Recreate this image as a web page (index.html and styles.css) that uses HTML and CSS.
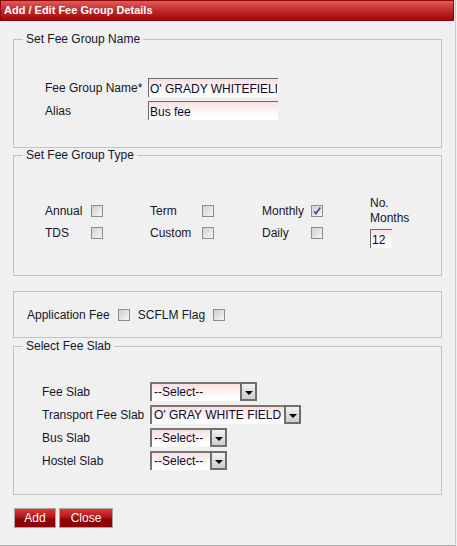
FILE: index.html
```html
<!DOCTYPE html>
<html>
<head>
<meta charset="utf-8">
<title>Add / Edit Fee Group Details</title>
<link rel="stylesheet" href="styles.css">
</head>
<body>
<div class="dialog">
  <div class="titlebar">Add / Edit Fee Group Details</div>

  <fieldset class="fs fs-name">
    <legend>Set Fee Group Name</legend>
    <div class="name-grid">
      <label>Fee Group Name*</label><input class="txt w130" value="O' GRADY WHITEFIELD">
      <label>Alias</label><input class="txt w130" value="Bus fee">
    </div>
  </fieldset>

  <fieldset class="fs fs-type">
    <legend>Set Fee Group Type</legend>
    <div class="type-grid">
      <div class="months">No.<br>Months<input class="txt w22" value="12"></div>
      <span>Annual</span><span class="cb"></span>
      <span>Term</span><span class="cb"></span>
      <span>Monthly</span><span class="cb"><svg class="tick" viewBox="0 0 10 10" width="10" height="10"><path d="M2 5.2 L4 7.6 L8.3 1.6" fill="none" stroke="#3d4f9a" stroke-width="1.7"/></svg></span>
      <span>TDS</span><span class="cb"></span>
      <span>Custom</span><span class="cb"></span>
      <span>Daily</span><span class="cb"></span>
    </div>
  </fieldset>

  <fieldset class="fs fs-flags">
    <div class="flags">
      <span class="flag-label">Application Fee</span><span class="cb"></span>
      <span class="flag-label">SCFLM Flag</span><span class="cb"></span>
    </div>
  </fieldset>

  <fieldset class="fs fs-slab">
    <legend>Select Fee Slab</legend>
    <div class="slab-grid">
      <label>Fee Slab</label>
      <div class="sel w107"><span class="sel-val">--Select--</span><span class="sel-btn"><i class="tri"></i></span></div>
      <label>Transport Fee Slab</label>
      <div class="sel w151"><span class="sel-val">O' GRAY WHITE FIELD</span><span class="sel-btn"><i class="tri"></i></span></div>
      <label>Bus Slab</label>
      <div class="sel w77"><span class="sel-val">--Select--</span><span class="sel-btn"><i class="tri"></i></span></div>
      <label>Hostel Slab</label>
      <div class="sel w77"><span class="sel-val">--Select--</span><span class="sel-btn"><i class="tri"></i></span></div>
    </div>
  </fieldset>

  <div class="actions">
    <button class="btn btn-add">Add</button>
    <button class="btn btn-close">Close</button>
  </div>
</div>
</body>
</html>
```

FILE: styles.css
```css
* { box-sizing: border-box; }
html, body { margin: 0; padding: 0; background: #f0f0f0; }
body {
  font: 12px/14px "Liberation Sans", Arial, sans-serif;
  color: #16162a;
  width: 457px;
  height: 546px;
  overflow: hidden;
}
.dialog {
  width: 456px;
  height: 546px;
  border-right: 1px solid #c9c9c9;
  border-bottom: 1px solid #b3b3b3;
}
.titlebar {
  width: 454px;
  height: 21px;
  border: 1px solid #8c0808;
  background: linear-gradient(#e05a5a, #bb2626 55%, #a00a0a);
  color: #fff;
  font-weight: bold;
  font-size: 11px;
  line-height: 19px;
  padding-left: 3px;
}
.fs {
  margin: 0 0 0 13px;
  width: 429px;
  padding: 0;
  border: 1px solid #c2c2c2;
  min-width: 0;
}
.fs legend {
  padding: 0 3px;
  margin-left: 9px;
  line-height: 14px;
}
.fs-name { margin-top: 11px; }
.fs-flags { margin-top: 15px; }
.fs-slab { margin-top: 1px; }

.name-grid {
  display: grid;
  grid-template-columns: 103px 130px;
  grid-auto-rows: 19px;
  row-gap: 4px;
  align-items: center;
  padding: 32px 0 27px 31px;
}
.txt {
  height: 19px;
  border: 0;
  border-top: 1px solid #6a6a6a;
  border-left: 1px solid #6a6a6a;
  background: linear-gradient(#fbe0e0, #ffffff 75%);
  font: 12px/17px "Liberation Sans", Arial, sans-serif;
  color: #0a0a2a;
  padding: 1px 1px 0;
  margin: 0;
  outline: none;
}
.w130 { width: 130px; }
.w22 { width: 22px; display: block; margin-top: 3px; }

.type-grid {
  display: grid;
  grid-template-columns: 46px 59px 52px 60px 49px 59px auto;
  grid-template-rows: 22px 22px;
  align-items: center;
  justify-items: start;
  padding: 38px 0 31px 31px;
}
.months {
  grid-column: 7;
  grid-row: 1 / span 2;
  align-self: start;
  line-height: 15px;
  margin: -4px 0;
}
.cb {
  display: block;
  width: 12px;
  height: 12px;
  border: 1px solid #8d8d8d;
  background: linear-gradient(135deg, #cfcfcf, #f6f6f6);
}
.tick { display: block; margin: 0; }

.flags {
  display: flex;
  align-items: center;
  height: 14px;
  margin: 16px 0 15px 13px;
}
.flag-label { margin-right: 8px; }
.flags .cb { margin-right: 8px; }

.slab-grid {
  display: grid;
  grid-template-columns: 108px auto;
  grid-auto-rows: 19px;
  row-gap: 4px;
  align-items: center;
  justify-items: start;
  padding: 29px 0 24px 28px;
}
.sel {
  display: flex;
  height: 19px;
}
.w107 { width: 107px; }
.w151 { width: 151px; }
.w77 { width: 77px; }
.sel-val {
  flex: 1;
  min-width: 0;
  overflow: hidden;
  white-space: nowrap;
  border-top: 2px solid #767676;
  border-left: 2px solid #767676;
  background: linear-gradient(#fbe0e0, #ffffff 80%);
  color: #0a0a2a;
  padding-left: 2px;
  line-height: 16px;
}
.sel-btn {
  width: 17px;
  flex: none;
  border: 2px solid #6e6e6e;
  background: linear-gradient(#f2f2f2, #cdcdcd);
  display: flex;
  align-items: center;
  justify-content: center;
}
.tri {
  display: block;
  width: 0;
  height: 0;
  border-left: 4px solid transparent;
  border-right: 4px solid transparent;
  border-top: 4px solid #000;
  margin-top: 2px;
}

.actions {
  display: flex;
  gap: 3px;
  margin: 13px 0 0 14px;
}
.btn {
  height: 20px;
  border: 1px solid #a6a6a6;
  background: linear-gradient(#d63a3a, #b31818 45%, #950000 55%, #8a0000);
  color: #fff;
  font: 12px/18px "Liberation Sans", Arial, sans-serif;
  padding: 0;
  text-align: center;
}
.btn-add { width: 42px; }
.btn-close { width: 54px; }
```
